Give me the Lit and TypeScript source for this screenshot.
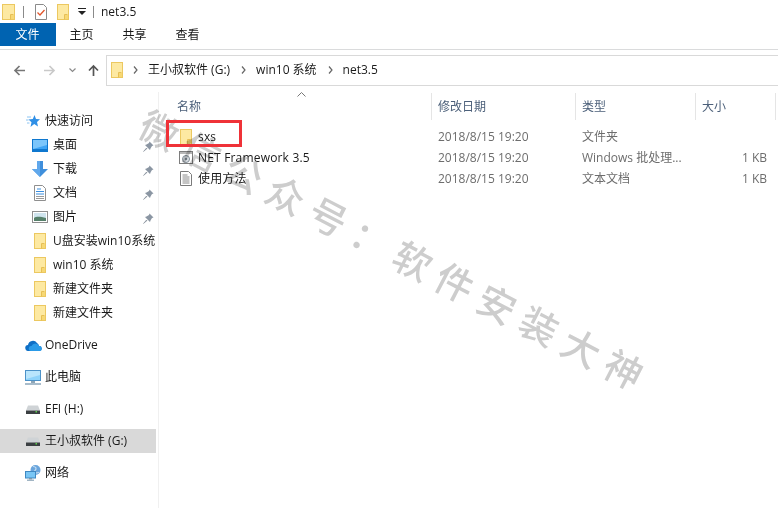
import { LitElement, html, css } from "lit";
import { customElement } from "lit/decorators.js";

const folder = (w = 12, h = 16) => html`<svg width=${w} height=${h} viewBox="0 0 ${w} 16">
  <rect x=".5" y=".5" width=${w - 1} height="15" fill="#fde9a2" stroke="#ecc860"/>
  <rect x=${w - 4} y="11" width="3" height="4" fill="#f7d874"/>
  <path d="M${w - 4.5} 15.500v-5h3" fill="none" stroke="#e6bf55"/>
</svg>`;

const pin = html`<svg class="pin" width="11" height="11" viewBox="0 0 11 11">
  <path d="M6.500.5 10.500 4.500 9 5 7.500 7.500 7 9 2 4l1.500-.5L6 2z" fill="#8b96a3"/>
  <path d="M3.500 7 .5 10.500 4 7.500z" fill="#7c8793" stroke="#7c8793" stroke-width=".5"/>
</svg>`;

const star = html`<svg width="14" height="14" viewBox="0 0 14 14">
  <path d="M8.500 1 10 5l4 .3-3 2.700 1 4.500-3.800-2.400L4.500 13l1-4.700L2.500 5.500 6.800 5z" fill="#2f8fe6"/>
  <path d="M1 3h4M0 6h2.500M1 9h2.500" stroke="#8cc4f2" stroke-width="1"/>
</svg>`;

const desktop = html`<svg width="16" height="13" viewBox="0 0 16 13">
  <rect x=".5" y=".5" width="15" height="12" fill="#3ea4f5" stroke="#0f78cf"/>
  <path d="M1 1h14v5L1 10z" fill="#7cc6fb"/>
  <rect x="1" y="10" width="14" height="2" fill="#0f78cf"/>
</svg>`;

const down = html`<svg width="16" height="16" viewBox="0 0 16 16">
  <path d="M5 0h6v8h5l-8 8-8-8h5z" fill="#3f8fdc"/>
  <path d="M5 0h3v16L0 8h5z" fill="#60a8ec"/>
</svg>`;

const docs = html`<svg width="12" height="16" viewBox="0 0 12 16">
  <path d="M.5.500h8l3 3v12H.5z" fill="#fff" stroke="#8f8f8f"/>
  <path d="M3 4h4M2 6.500h8M2 9h8" stroke="#3a8fe0" stroke-width="1"/>
  <path d="M2 11.500h8M2 13.500h8" stroke="#9a9a9a" stroke-width="1"/>
</svg>`;

const pics = html`<svg width="16" height="12" viewBox="0 0 16 12">
  <rect x=".5" y=".5" width="15" height="11" fill="#fff" stroke="#8f8f8f"/>
  <rect x="2" y="2" width="12" height="8" fill="#cfe4ee"/>
  <path d="M2 7c3-2 7-1 12 0v3H2z" fill="#56806a"/>
</svg>`;

const cloud = html`<svg width="17" height="11" viewBox="0 0 17 11">
  <path d="M3.500 11A3 3 0 0 1 3 5a5 5 0 0 1 9-2 3.800 3.800 0 0 1 2 3 2.500 2.500 0 0 1 .5 5z" fill="#0f6fc6"/>
  <path d="M6 11a2.500 2.500 0 0 1 .5-5A4 4 0 0 1 14 6a2.500 2.500 0 0 1 .5 5z" fill="#2b9be8"/>
</svg>`;

const monitor = html`<svg width="16" height="15" viewBox="0 0 16 15">
  <rect x=".5" y=".5" width="15" height="10" fill="#8fd3fa" stroke="#4c92c8"/>
  <path d="M1 1h14v4L1 9z" fill="#b9e5fc"/>
  <rect x="6" y="11" width="4" height="2" fill="#8ea6b8"/>
  <rect x="0" y="13" width="16" height="2" fill="#a8bccb"/>
</svg>`;

const drive = html`<svg width="14" height="9" viewBox="0 0 14 9">
  <path d="M2 .5h10l2 5H0z" fill="#cfd3d6"/>
  <rect y="5.500" width="14" height="3.500" fill="#3b3f42"/>
  <rect x="9.500" y="6" width="1.500" height="1.500" fill="#5ad04a"/>
</svg>`;

const net = html`<svg width="16" height="16" viewBox="0 0 16 16">
  <circle cx="10.500" cy="5" r="5" fill="#6aa5dc"/>
  <path d="M8 1.500c3 0 4 2 2 4s1 3 4 2" fill="none" stroke="#c4ddf2" stroke-width="1.200"/>
  <rect x=".5" y="6.500" width="10" height="6.500" fill="#79c6f5" stroke="#3f88c2"/>
  <rect x="4" y="13" width="3" height="1.500" fill="#7f97aa"/>
  <rect x="2" y="14.500" width="7" height="1.500" fill="#a1b5c4"/>
</svg>`;

const setup = html`<svg width="14" height="13" viewBox="0 0 14 13">
  <rect x=".5" y=".5" width="13" height="12" fill="#fff" stroke="#7d7d7d"/>
  <rect x="1" y="1" width="12" height="2" fill="#b8b8b8"/>
  <circle cx="7" cy="8" r="3.500" fill="#dfe4e8" stroke="#7f8a94"/>
  <circle cx="7" cy="8" r="1.300" fill="#7f8a94"/>
</svg>`;

const txt = html`<svg width="12" height="15" viewBox="0 0 12 15">
  <path d="M.5.500h8l3 3v11H.5z" fill="#fff" stroke="#7b7b7b"/>
  <path d="M2.500 4h5M2.500 6h7M2.500 8h7M2.500 10h7M2.500 12h7" stroke="#8a8a8a"/>
</svg>`;

const checkDoc = html`<svg width="12" height="16" viewBox="0 0 12 16">
  <path d="M.5.500h8l3 3v12H.5z" fill="#fff" stroke="#8a8a8a"/>
  <path d="M2.500 8.500l2.500 2.500 4.500-5" fill="none" stroke="#e2552b" stroke-width="1.300"/>
</svg>`;

const crumbSep = html`<svg class="crumb-sep" width="5" height="8" viewBox="0 0 5 8"><path d="M1 .5 4 4 1 7.500" fill="none" stroke="#666" stroke-width="1.200"/></svg>`;

const arrow = (color: string, d: string) => html`<svg width="13" height="13" viewBox="0 0 13 13"><path d=${d} fill="none" stroke=${color} stroke-width="1.700"/></svg>`;

interface NavItem { icon: unknown; label: string; pin?: boolean; sub?: boolean; sel?: boolean; }

const groups: NavItem[][] = [
  [
    { icon: star, label: "快速访问" },
    { icon: desktop, label: "桌面", pin: true, sub: true },
    { icon: down, label: "下载", pin: true, sub: true },
    { icon: docs, label: "文档", pin: true, sub: true },
    { icon: pics, label: "图片", pin: true, sub: true },
    { icon: folder(), label: "U盘安装win10系统", sub: true },
    { icon: folder(), label: "win10 系统", sub: true },
    { icon: folder(), label: "新建文件夹", sub: true },
    { icon: folder(), label: "新建文件夹", sub: true },
  ],
  [{ icon: cloud, label: "OneDrive" }],
  [{ icon: monitor, label: "此电脑" }],
  [{ icon: drive, label: "EFI (H:)" }],
  [{ icon: drive, label: "王小叔软件 (G:)", sel: true }],
  [{ icon: net, label: "网络" }],
];

const files = [
  { icon: folder(), name: "sxs", date: "2018/8/15 19:20", type: "文件夹", size: "" },
  { icon: setup, name: "NET Framework 3.5", date: "2018/8/15 19:20", type: "Windows 批处理...", size: "1 KB" },
  { icon: txt, name: "使用方法", date: "2018/8/15 19:20", type: "文本文档", size: "1 KB" },
];

@customElement("app-root")
export class AppRoot extends LitElement {
  static styles = css`
    :host {
      display: block; position: relative; width: 778px; height: 508px; overflow: hidden;
      background: #fff; color: #1a1a1a;
      font: 12px/16px "Open Sans", "Noto Sans CJK SC", sans-serif;
    }
    svg { display: block; flex: none; }
    .title { height: 23px; display: flex; align-items: center; padding-left: 2px; }
    .vsep { width: 1px; height: 12px; background: #8a8a8a; }
    .t1 { margin-left: 8px; }
    .t2 { margin-left: 11px; padding-top: 1px; }
    .t3 { margin-left: 10px; padding-top: 1px; }
    .t4 { margin-left: 9px; }
    .t5 { margin-left: 7px; }
    .t6 { margin-left: 7px; }
    .tabs { height: 23px; display: flex; }
    .tab { width: 53px; display: flex; align-items: center; justify-content: center; padding-top: 1px; box-sizing: border-box; }
    .tab.file { width: 55px; background: #0063b1; color: #fff; box-shadow: 1px 0 0 #0063b1; }
    .ribbon-line { height: 1px; margin-top: 3px; background: #dadbdc; }
    .nav { height: 36px; display: flex; align-items: flex-start; }
    .nav-btns { width: 106px; height: 30px; margin-top: 5px; display: flex; align-items: center; flex: none; padding-left: 13px; box-sizing: border-box; }
    .nav-btns .b2 { margin-left: 17px; }
    .nav-btns .b3 { margin-left: 13px; }
    .nav-btns .b4 { margin-left: 11px; }
    .addr {
      flex: 1; height: 31px; margin-top: 5px; box-sizing: border-box; border: 1px solid #d9d9d9; border-right: 0;
      display: flex; align-items: center; padding: 0 0 1px 4px;
    }
    .addr .crumb-sep { margin: 0 10px 0 10px; }
    .addr span { white-space: nowrap; }
    .addr .c1 { margin-right: 1px; }
    .addr .c2 { margin-right: 1px; }
    .body { display: flex; height: 422px; }
    .side { width: 158px; flex: none; box-sizing: border-box; padding-top: 23px; }
    .group { margin-bottom: 8px; }
    .item { height: 24px; width: 156px; display: flex; align-items: center; white-space: nowrap; overflow: hidden; position: relative; }
    .item.sel { background: #d9d9d9; }
    .ic { width: 18px; margin-left: 24px; margin-right: 3px; display: flex; justify-content: center; flex: none; }
    .sub .ic { margin-left: 31px; margin-right: 4px; }
    .pin { position: absolute; left: 143px; top: 8px; }
    .pane { flex: 1; margin-top: 6px; border-left: 1px solid #f0f0f0; position: relative; }
    .grid { display: grid; grid-template-columns: 273px 144px 120px 80px; }
    .head { height: 27px; margin-top: 1px; color: #4c607a; margin-bottom: 6px; }
    .head > div { box-sizing: border-box; padding-left: 6px; display: flex; align-items: center; border-right: 1px solid #e5e5e5; }
    .head > div:first-child { padding-left: 18px; }
    .sort { position: absolute; left: 138px; top: 0; }
    .row { height: 21px; align-items: center; white-space: nowrap; color: #6d6d6d; }
    .row > div { padding-left: 6px; }
    .row .name { display: flex; align-items: center; padding-left: 21px; color: #1a1a1a; }
    .fi { width: 12px; display: flex; justify-content: center; flex: none; }
    .row .name span { margin-left: 6px; letter-spacing: .18px; }
    .row .sz { text-align: right; padding-right: 9px; }
    .redbox { position: absolute; left: 166px; top: 120px; width: 76px; height: 27px; box-sizing: border-box; border: 3px solid #ef3238; }
    .mark {
      position: absolute; left: 143px; top: 102px; height: 36px; white-space: nowrap; pointer-events: none;
      font: 500 38px/36px "Noto Sans CJK SC", sans-serif; letter-spacing: 9.5px; color: #cdcdcd;
      transform-origin: left center; transform: rotate(27.3deg); mix-blend-mode: multiply;
    }
  `;

  render() {
    return html`
      <div class="title">
        ${folder(13, 16)}
        <div class="vsep t1"></div>
        <div class="t2">${checkDoc}</div>
        <div class="t3">${folder(12, 16)}</div>
        <svg class="t4" width="8" height="8" viewBox="0 0 8 8"><path d="M0 0h8v1H0zM0 3h8L4 7z" fill="#222"/></svg>
        <div class="vsep t5"></div>
        <span class="t6">net3.5</span>
      </div>
      <div class="tabs">
        <div class="tab file">文件</div>
        <div class="tab">主页</div>
        <div class="tab">共享</div>
        <div class="tab">查看</div>
      </div>
      <div class="ribbon-line"></div>
      <div class="nav">
        <div class="nav-btns">
          ${arrow("#777", "M12 6.500H2M6.500 2 2 6.500 6.500 11")}
          <div class="b2">${arrow("#c9c9c9", "M1 6.500h10M6.500 2 11 6.500 6.500 11")}</div>
          <svg class="b3" width="7" height="5" viewBox="0 0 7 5"><path d="M.5.500 3.500 3.500 6.500.5" fill="none" stroke="#8a8a8a" stroke-width="1.200"/></svg>
          <div class="b4">${arrow("#555", "M6.500 12V2M2 6.500 6.500 2 11 6.500")}</div>
        </div>
        <div class="addr">
          ${folder(12, 16)}
          ${crumbSep}<span class="c1">王小叔软件 (G:)</span>
          ${crumbSep}<span class="c2">win10 系统</span>
          ${crumbSep}<span>net3.5</span>
        </div>
      </div>
      <div class="body">
        <div class="side">
          ${groups.map(g => html`<div class="group">${g.map(i => html`
            <div class="item ${i.sub ? "sub" : ""} ${i.sel ? "sel" : ""}">
              <div class="ic">${i.icon}</div><span>${i.label}</span>${i.pin ? pin : ""}
            </div>`)}</div>`)}
        </div>
        <div class="pane">
          <svg class="sort" width="9" height="5" viewBox="0 0 9 5"><path d="M.5 4.500 4.500.5 8.500 4.500" fill="none" stroke="#777"/></svg>
          <div class="grid head">
            <div>名称</div><div>修改日期</div><div>类型</div><div>大小</div>
          </div>
          ${files.map(f => html`
            <div class="grid row">
              <div class="name"><div class="fi">${f.icon}</div><span>${f.name}</span></div>
              <div>${f.date}</div><div>${f.type}</div><div class="sz">${f.size}</div>
            </div>`)}
        </div>
      </div>
      <div class="mark">微信公众号：软件安装大神</div>
      <div class="redbox"></div>
    `;
  }
}
